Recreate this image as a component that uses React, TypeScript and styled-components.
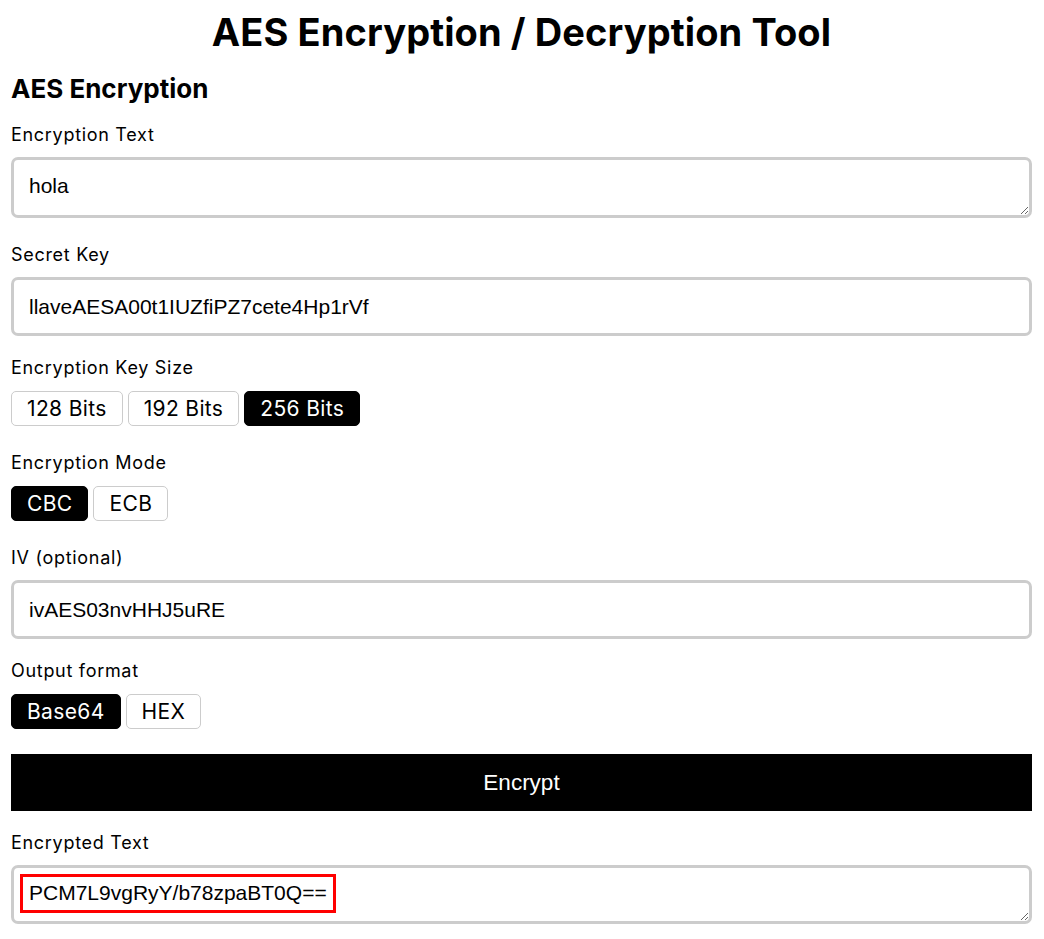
import React from "react";
import styled, { createGlobalStyle } from "styled-components";

const Global = createGlobalStyle`
  html, body { margin: 0; padding: 0; background: #fff; }
  body { font-family: Inter, "Noto Sans", sans-serif; color: #000; }
  * { box-sizing: border-box; }
`;

const Page = styled.div`
  padding: 0 12px 20px 11px;
  display: flex;
  flex-direction: column;
`;

const Title = styled.h1`
  margin: 10px 0 0;
  font-size: 38px;
  line-height: 44px;
  font-weight: 700;
  text-align: center;
  letter-spacing: 0.1px;
`;

const Section = styled.h2`
  margin: 20px 0 0;
  font-size: 26px;
  line-height: 30px;
  font-weight: 700;
`;

const Label = styled.label<{ $gap?: number }>`
  display: block;
  margin-top: ${(p) => p.$gap ?? 22}px;
  margin-bottom: 12px;
  font-size: 18px;
  line-height: 20px;
  font-weight: 400;
  letter-spacing: 0.7px;
`;

const Area = styled.textarea`
  display: block;
  width: 100%;
  height: 61px;
  margin-bottom: 5px;
  border: 3px solid #ccc;
  border-radius: 7px;
  padding: 14px 15px;
  font-family: "Liberation Sans", Arial, sans-serif;
  font-size: 21px;
  line-height: 24px;
  color: #000;
  resize: vertical;
  outline: none;
`;

const Input = styled.input`
  display: block;
  width: 100%;
  height: 59px;
  border: 3px solid #ccc;
  border-radius: 7px;
  padding: 0 15px;
  font-family: "Liberation Sans", Arial, sans-serif;
  font-size: 21px;
  color: #000;
  outline: none;
`;

const Output = styled.div`
  width: 100%;
  height: 59px;
  border: 3px solid #ccc;
  border-radius: 7px;
  padding: 6px 6px;
  overflow: auto;
  resize: vertical;
  font-family: "Liberation Sans", Arial, sans-serif;
  font-size: 21px;
  line-height: 24px;
`;

const Highlight = styled.span`
  display: inline-block;
  border: 3px solid #ff0000;
  padding: 4px 6px 5px 6px;
`;

const Group = styled.div`
  display: flex;
  gap: 5px;
  margin: 1px 0 5px;
`;

const Choice = styled.button<{ $active?: boolean }>`
  height: 35px;
  padding: 0 15px;
  border: 1px solid ${(p) => (p.$active ? "#000" : "#ccc")};
  border-radius: 5px;
  background: ${(p) => (p.$active ? "#000" : "#fff")};
  color: ${(p) => (p.$active ? "#fff" : "#000")};
  font-family: Inter, "Noto Sans", sans-serif;
  font-size: 21px;
  letter-spacing: 0.35px;
  font-weight: 400;
  cursor: pointer;
`;

const Submit = styled.button`
  margin-top: 20px;
  width: 100%;
  height: 57px;
  border: none;
  background: #000;
  color: #fff;
  font-family: "Liberation Sans", Arial, sans-serif;
  font-size: 22.5px;
  cursor: pointer;
`;

export default function App() {
  return (
    <Page>
      <Global />
      <Title>AES Encryption / Decryption Tool</Title>
      <Section>AES Encryption</Section>
      <Label $gap={21}>Encryption Text</Label>
      <Area defaultValue="hola" />
      <Label>Secret Key</Label>
      <Input defaultValue="llaveAESA00t1IUZfiPZ7cete4Hp1rVf" />
      <Label>Encryption Key Size</Label>
      <Group>
        <Choice>128 Bits</Choice>
        <Choice>192 Bits</Choice>
        <Choice $active>256 Bits</Choice>
      </Group>
      <Label>Encryption Mode</Label>
      <Group>
        <Choice $active>CBC</Choice>
        <Choice>ECB</Choice>
      </Group>
      <Label>IV (optional)</Label>
      <Input defaultValue="ivAES03nvHHJ5uRE" />
      <Label>Output format</Label>
      <Group>
        <Choice $active>Base64</Choice>
        <Choice>HEX</Choice>
      </Group>
      <Submit>Encrypt</Submit>
      <Label>Encrypted Text</Label>
      <Output>
        <Highlight>PCM7L9vgRyY/b78zpaBT0Q==</Highlight>
      </Output>
    </Page>
  );
}
